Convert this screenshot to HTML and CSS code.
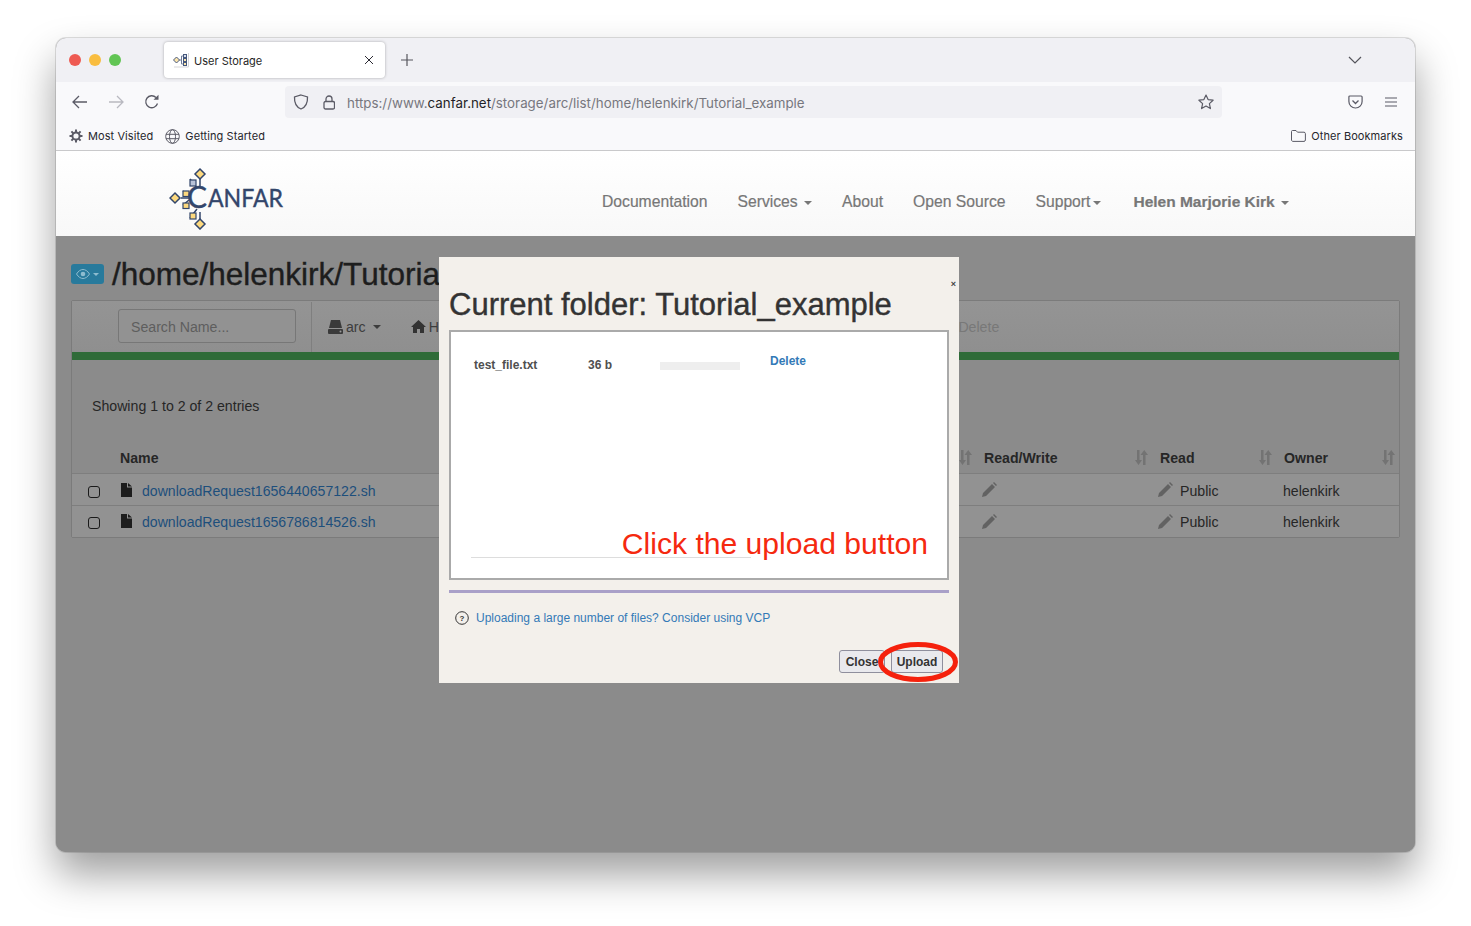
FILE: index.html
```html
<!DOCTYPE html>
<html lang="en">
<head>
<meta charset="utf-8">
<title>User Storage</title>
<link rel="stylesheet" href="styles.css">
</head>
<body>
<div class="window">
  <div class="tabbar">
    <div class="lights"><i class="light red"></i><i class="light amber"></i><i class="light green"></i></div>
    <div class="tab">
      <svg class="favicon" width="16" height="16" viewBox="0 0 16 16" fill="none"><path d="M15.500 1v14H1" stroke="#d5d5d8"/><path d="M6 8h2.500M8.500 8V4h2M8.500 8v4h2" stroke="#6d7b98"/><path d="M3.500 5 6.500 8l-3 3-3-3z" fill="#fde6ad" stroke="#46587c"/><rect x="10.500" y="2.500" width="3" height="3" fill="#d6deec" stroke="#46587c"/><rect x="10.500" y="6.500" width="3" height="3" fill="#fde6ad" stroke="#46587c"/><rect x="10.500" y="10.500" width="3" height="3" fill="#fde6ad" stroke="#46587c"/></svg>
      <span class="tab-title">User Storage</span>
      <svg class="tab-close" width="10" height="10" viewBox="0 0 10 10"><path d="M1 1l8 8M9 1l-8 8" stroke="#2b2a33" stroke-width="1"/></svg>
    </div>
    <svg class="newtab" width="12" height="12" viewBox="0 0 12 12"><path d="M6 0v12M0 6h12" stroke="#55555c" stroke-width="1.200"/></svg>
    <svg class="tabs-menu" width="14" height="8" viewBox="0 0 14 8" fill="none"><path d="M1 1l6 6 6-6" stroke="#55555c" stroke-width="1.200"/></svg>
  </div>

  <div class="toolbar">
    <svg class="tool" width="16" height="14" viewBox="0 0 16 14" fill="none"><path d="M15 7H1.500M7 1 1 7l6 6" stroke="#5b5b66" stroke-width="1.300"/></svg>
    <svg class="tool fwd" width="16" height="14" viewBox="0 0 16 14" fill="none"><path d="M1 7h13.500M9 1l6 6-6 6" stroke="#b9b9c0" stroke-width="1.300"/></svg>
    <svg class="tool reload" width="16" height="16" viewBox="0 0 16 16" fill="none"><path d="M13.500 9.500A6 6 0 1 1 12 3.500" stroke="#5b5b66" stroke-width="1.300"/><path d="M14.500.8v5h-5z" fill="#5b5b66"/></svg>
    <div class="urlbar">
      <svg class="shield" width="16" height="16" viewBox="0 0 16 16" fill="none"><path d="M8 1 14.500 3c.3 6-1.500 10-6.500 12C3 13 1.200 9 1.500 3z" stroke="#5b5b66" stroke-width="1.300"/></svg>
      <svg class="lock" width="12" height="15" viewBox="0 0 12 15" fill="none"><rect x="1" y="6.500" width="10.500" height="7.500" rx="1.500" stroke="#5b5b66" stroke-width="1.300"/><path d="M3 6.500V4a3 3 0 0 1 6 0v2.500" stroke="#5b5b66" stroke-width="1.300"/></svg>
      <span class="url">https://www.<b>canfar.net</b>/storage/arc/list/home/helenkirk/Tutorial_example</span>
      <svg class="star" width="16" height="16" viewBox="0 0 16 16" fill="none"><path d="M8 1l2.100 4.600 5 .6-3.700 3.400 1 5L8 12.100 3.600 14.600l1-5L.9 6.200l5-.6z" stroke="#5b5b66" stroke-width="1.200" stroke-linejoin="round"/></svg>
    </div>
    <svg class="pocket" width="15" height="14" viewBox="0 0 15 14" fill="none"><path d="M1.800 1h11.400c.5 0 .9.400.9.900V6.500A6.500 6.500 0 0 1 7.500 13 6.500 6.500 0 0 1 .9 6.500V1.900c0-.5.400-.9.900-.9z" stroke="#5b5b66" stroke-width="1.200"/><path d="M4.500 5.500l3 3 3-3" stroke="#5b5b66" stroke-width="1.300"/></svg>
    <svg class="menu" width="12" height="10" viewBox="0 0 12 10"><path d="M0 1h12M0 5h12M0 9h12" stroke="#5b5b66" stroke-width="1.100"/></svg>
  </div>

  <div class="bookmarks">
    <svg class="bm-icon" width="14" height="14" viewBox="0 0 14 14"><circle cx="7" cy="7" r="3.600" fill="none" stroke="#5b5b66" stroke-width="2"/><path d="M7 .5v2.500M7 11v2.500M.5 7H3M11 7h2.500M2.400 2.400l1.800 1.800M9.800 9.800l1.800 1.800M11.600 2.400 9.800 4.200M4.200 9.800l-1.800 1.800" stroke="#5b5b66" stroke-width="2"/></svg>
    <span class="bm-label">Most Visited</span>
    <svg class="bm-icon globe" width="15" height="15" viewBox="0 0 15 15" fill="none"><circle cx="7.500" cy="7.500" r="6.800" stroke="#5b5b66"/><ellipse cx="7.500" cy="7.500" rx="3" ry="6.800" stroke="#5b5b66"/><path d="M1 5.300h13M1 9.700h13" stroke="#5b5b66"/></svg>
    <span class="bm-label">Getting Started</span>
    <svg class="bm-icon folder" width="15" height="12" viewBox="0 0 15 12" fill="none"><path d="M1.500.5H5l1.500 1.700H13c.8 0 1.400.6 1.400 1.400v6.400c0 .8-.6 1.400-1.400 1.400H2c-.8 0-1.500-.6-1.500-1.400V1.500c0-.6.400-1 1-1z" stroke="#5b5b66"/></svg>
    <span class="bm-label">Other Bookmarks</span>
  </div>

  <header class="site-header">
    <svg class="logo" width="125" height="64" viewBox="0 0 125 64" fill="none" role="img" aria-label="CANFAR">
      <path d="M31 10v12M21 13l7 9M31 46v12M21 52l7-9M12 32h8M14 25l6 5M14 39l6-5" stroke="#33466b" stroke-width="1.500"/>
      <path d="M31 3l5 5-5 5-5-5z" fill="#fdd97e" stroke="#33466b" stroke-width="1.500"/>
      <path d="M31 53l5 5-5 5-5-5z" fill="#fdd97e" stroke="#33466b" stroke-width="1.500"/>
      <path d="M6 27l5 5-5 5-5-5z" fill="#fdd97e" stroke="#33466b" stroke-width="1.500"/>
      <rect x="21" y="14" width="6" height="6" fill="#b9c3d8" stroke="#33466b" stroke-width="1.200"/>
      <rect x="14" y="25" width="6" height="5.500" fill="#fdd97e" stroke="#33466b" stroke-width="1.200"/>
      <rect x="14" y="37" width="6" height="5.500" fill="#fdd97e" stroke="#33466b" stroke-width="1.200"/>
      <rect x="21" y="47" width="6" height="6" fill="#fdd97e" stroke="#33466b" stroke-width="1.200"/>
      <text class="logo-c" x="18" y="42">C</text>
      <text class="logo-text" x="39" y="41" textLength="75" lengthAdjust="spacingAndGlyphs">ANFAR</text>
    </svg>
    <nav class="site-nav">
      <a class="nav-link">Documentation</a>
      <a class="nav-link">Services <i class="caret"></i></a>
      <a class="nav-link">About</a>
      <a class="nav-link">Open Source</a>
      <a class="nav-link">Support<i class="caret tight"></i></a>
      <a class="nav-link user">Helen Marjorie Kirk <i class="caret"></i></a>
    </nav>
  </header>

  <main class="content">
    <div class="page-title">
      <button class="eye-btn">
        <svg width="14" height="10" viewBox="0 0 14 10" fill="none"><path d="M.5 5C2.500 1.800 4.800.5 7 .5S11.500 1.800 13.500 5C11.500 8.200 9.200 9.500 7 9.500S2.500 8.200.5 5z" stroke="#8dbccf"/><circle cx="7" cy="5" r="2.300" fill="#8dbccf"/></svg>
        <i class="caret light-caret"></i>
      </button>
      <h1>/home/helenkirk/Tutorial_example</h1>
    </div>

    <section class="panel">
      <div class="panel-tools">
        <div class="search">Search Name...</div>
        <div class="tool-divider"></div>
        <span class="tool-item arc">
          <svg width="15" height="14" viewBox="0 0 15 14"><path d="M3 0h9l2 8H1z" fill="#3a3a3a"/><rect y="9" width="15" height="5" rx="1" fill="#3a3a3a"/><circle cx="12.500" cy="11.500" r="1" fill="#999"/></svg>
          arc <i class="caret"></i>
        </span>
        <span class="tool-item home">
          <svg width="15" height="13" viewBox="0 0 15 13"><path d="M7.500 0 15 7h-2v6H9V9H6v4H2V7H0z" fill="#333"/></svg>
          Home
        </span>
        <span class="tool-item delete">Delete</span>
      </div>
      <div class="green-bar"></div>
      <p class="entries">Showing 1 to 2 of 2 entries</p>
      <div class="table">
        <div class="thead">
          <span></span>
          <span class="th">Name<svg class="sort"><use href="#sort"/></svg></span>
          <span class="th">Read/Write<svg class="sort"><use href="#sort"/></svg></span>
          <span class="th">Read<svg class="sort"><use href="#sort"/></svg></span>
          <span class="th last">Owner<svg class="sort"><use href="#sort"/></svg></span>
        </div>
        <div class="tr">
          <span class="check-cell"><i class="check"></i></span>
          <span class="td"><svg class="file"><use href="#file"/></svg><a class="file-link">downloadRequest1656440657122.sh</a></span>
          <span class="td"><svg class="pencil"><use href="#pencil"/></svg></span>
          <span class="td"><svg class="pencil"><use href="#pencil"/></svg><span class="public">Public</span></span>
          <span class="td owner">helenkirk</span>
        </div>
        <div class="tr">
          <span class="check-cell"><i class="check"></i></span>
          <span class="td"><svg class="file"><use href="#file"/></svg><a class="file-link">downloadRequest1656786814526.sh</a></span>
          <span class="td"><svg class="pencil"><use href="#pencil"/></svg></span>
          <span class="td"><svg class="pencil"><use href="#pencil"/></svg><span class="public">Public</span></span>
          <span class="td owner">helenkirk</span>
        </div>
      </div>
    </section>

    <div class="modal">
      <span class="modal-x">×</span>
      <h2>Current folder: Tutorial_example</h2>
      <div class="file-box">
        <div class="file-row">
          <span class="f-name">test_file.txt</span>
          <span class="f-size">36 b</span>
          <span class="f-bar"></span>
          <a class="f-del">Delete</a>
        </div>
        <div class="file-rule"></div>
        <span class="note">Click the upload button</span>
      </div>
      <div class="purple"></div>
      <div class="help">
        <svg width="14" height="14" viewBox="0 0 14 14" fill="none"><circle cx="7" cy="7" r="6.300" stroke="#333"/><text class="q" x="7" y="9.600">?</text></svg>
        <a class="help-link">Uploading a large number of files? Consider using VCP</a>
      </div>
      <div class="modal-actions">
        <button class="btn close">Close</button>
        <button class="btn upload">Upload</button>
      </div>
      <svg class="ring" width="84" height="44" viewBox="0 0 84 44" fill="none"><ellipse cx="42" cy="22" rx="37.500" ry="17.500" stroke="#f5210c" stroke-width="5"/></svg>
    </div>
  </main>
</div>

<svg class="defs" width="0" height="0">
  <defs>
    <symbol id="sort" viewBox="0 0 14 15"><path d="M3 0h2.500v10H8l-3.500 5L1 10h2zM9 15h2.500V5H14L10.250 0 6.500 5H9z" fill="#737373"/></symbol>
    <symbol id="file" viewBox="0 0 11 14"><path d="M0 0h6v4.500h5V14H0zM7 0l4 3.500H7z" fill="#1d1d1d"/></symbol>
    <symbol id="pencil" viewBox="0 0 15 15"><path d="M0 15l1-4L10 2l3 3-9 9zM11 1l1-1 3 3-1 1z" fill="#626262"/></symbol>
  </defs>
</svg>
</body>
</html>
```

FILE: styles.css
```css
* { box-sizing: border-box; }
html, body { margin: 0; height: 100%; overflow: hidden; background: #fff; }
body { padding: 38px 56px 0; font-family: "Liberation Sans", Arial, sans-serif; }
i { display: inline-block; font-style: normal; }
a { text-decoration: none; }
h1, h2, p { margin: 0; font-weight: 400; }

.window {
  width: 1359px;
  height: 814px;
  border-radius: 10px;
  overflow: hidden;
  display: flex;
  flex-direction: column;
  box-shadow: 0 0 0 1px rgba(0,0,0,.12), 0 22px 40px rgba(0,0,0,.38);
  background: #8b8b8b;
}

/* browser chrome */
.tabbar {
  height: 44px;
  background: #f0f0f4;
  display: flex;
  align-items: center;
  padding-left: 13px;
  flex: none;
}
.lights { display: flex; gap: 8px; width: 95px; }
.light { width: 12px; height: 12px; border-radius: 50%; }
.red { background: #ee5a52; }
.amber { background: #f9bd3f; }
.green { background: #62c554; }
.tab {
  width: 221px;
  height: 36px;
  background: #fff;
  border-radius: 4px;
  box-shadow: 0 0 3px rgba(0,0,0,.3);
  display: flex;
  align-items: center;
  padding: 0 11px 0 9px;
  font: 11px Inter, sans-serif;
  color: #1f1f26;
}
.favicon { margin-right: 5px; }
.tab-title { flex: 1; padding-top: 2px; }
.newtab { margin-left: 16px; }
.tabs-menu { margin-left: 935px; }

.toolbar {
  height: 42px;
  background: #f9f9fb;
  display: flex;
  align-items: center;
  padding: 0 16px 2px 16px;
  flex: none;
}
.fwd { margin-left: 20px; }
.reload { margin-left: 20px; }
.urlbar {
  margin-left: 125px;
  width: 937px;
  height: 32px;
  background: #f0f0f4;
  border-radius: 4px;
  display: flex;
  align-items: center;
  padding: 0 8px;
}
.lock { margin-left: 14px; }
.url { flex: 1; margin-left: 12px; padding-top: 2px; font: 13.350px Inter, sans-serif; color: #77777e; }
.url b { font-weight: 400; color: #1f1f26; }
.pocket { margin-left: 126px; }
.menu { margin-left: 22px; }

.bookmarks {
  height: 27px;
  background: #f9f9fb;
  border-bottom: 1px solid #c9c9cb;
  display: flex;
  align-items: center;
  padding: 0 12px 2px 13px;
  flex: none;
  font: 11px Inter, sans-serif;
  letter-spacing: .08px;
  color: #26262c;
}
.bm-label { margin-left: 5px; }
.globe { margin-left: 12px; }
.folder { margin-left: auto; }

.site-header {
  height: 85px;
  flex: none;
  background: linear-gradient(#fff, #f8f8f8);
  display: flex;
  align-items: center;
  position: relative;
}
.logo { margin-left: 113px; margin-top: 8px; flex: none; }
.logo-text { font: 25px Lato, sans-serif; fill: #33466b; stroke: #33466b; stroke-width: .4px; }
.logo-c { font: 30px Lato, sans-serif; fill: #33466b; stroke: #33466b; stroke-width: .4px; }
.site-nav {
  margin-left: 308px;
  display: flex;
  gap: 30px;
  font-size: 15.700px;
  color: #777;
  white-space: nowrap;
  margin-top: 17px;
  -webkit-text-stroke: .2px #777;
}
.user { font-weight: 700; font-size: 15.500px; margin-left: 2px; }
.caret {
  width: 0;
  height: 0;
  border: 4px solid transparent;
  border-top-color: currentColor;
  border-bottom: 0;
  margin-left: 2px;
  vertical-align: middle;
}
.caret.tight { margin-left: 3px; }

/* dimmed page */
.content {
  flex: 1;
  position: relative;
  background: #8b8b8b;
  padding: 28px 15px 0 15px;
}
.page-title { display: flex; align-items: center; height: 20px; }
.eye-btn {
  width: 33px;
  height: 20px;
  padding: 0 0 0 5px;
  border: 0;
  border-radius: 3px;
  background: #287a9c;
  display: flex;
  align-items: center;
  color: #8dbccf;
}
.light-caret { margin-left: 3px; border-width: 3px; border-bottom: 0; }
h1 { margin-left: 8px; font-size: 31.500px; color: #1d1d1d; white-space: nowrap; line-height: 20px; -webkit-text-stroke: .4px #1d1d1d; }

.panel {
  margin: 16px 0 0;
  border: 1px solid #7b7b7b;
  border-radius: 2px;
  height: 238px;
  font-size: 14.150px;
  color: #262626;
}
.panel-tools {
  height: 51px;
  padding-bottom: 2px;
  background: linear-gradient(#949494, #8f8f8f);
  display: flex;
  align-items: center;
  position: relative;
}
.search {
  width: 178px;
  height: 34px;
  margin-left: 46px;
  border: 1px solid #777;
  border-radius: 3px;
  background: #929292;
  color: #5e5e5e;
  padding-left: 12px;
  line-height: 34px;
}
.tool-divider { width: 1px; height: 50px; margin-top: 2px; background: #7f7f7f; margin-left: 15px; }
.tool-item { display: inline-flex; align-items: center; gap: 3px; color: #3d3d3d; padding-top: 2px; }
.arc { margin-left: 16px; }
.arc .caret { margin-left: 4px; }
.home { margin-left: 30px; }
.delete { margin-left: 492px; color: #787878; }
.green-bar { height: 8px; background: #2f6b38; }
.entries { padding: 36px 0 0 20px; line-height: 20px; }

.table { margin-top: 25px; }
.thead, .tr {
  display: grid;
  grid-template-columns: 48px 864px 176px 124px 1fr;
  align-items: center;
}
.thead { height: 33px; border-bottom: 1px solid #7e7e7e; font-weight: 700; padding-top: 1px; }
.tr { height: 32px; padding-top: 2px; background: #929292; border-bottom: 1px solid #7e7e7e; }
.tr:last-child { height: 31px; padding-top: 1px; border-bottom: 0; }
.th { display: flex; justify-content: space-between; align-items: center; padding-right: 12px; }
.th:first-of-type { }
.th.last { padding-right: 4px; }
.sort { width: 14px; height: 15px; }
.check-cell { display: flex; padding-left: 16px; }
.check { width: 12px; height: 12px; border: 1px solid #1a1a1a; border-radius: 3px; margin-top: 2px; }
.td { display: flex; align-items: center; white-space: nowrap; }
.owner { margin-left: -1px; }
.file { width: 11px; height: 14px; margin: -2px 10px 0 1px; }
.file-link { color: #1d4f7c; font-size: 14.100px; }
.pencil { width: 15px; height: 15px; margin: -2px 7px 0 -2px; }

/* dialog */
.modal {
  position: absolute;
  left: 383px;
  top: 21px;
  width: 520px;
  height: 426px;
  background: #f3f0eb;
  padding: 0 10px;
  color: #333;
}
.modal-x { position: absolute; right: 3px; top: 22px; font: 700 9px "Liberation Sans", sans-serif; color: #444; }
h2 { font-size: 31px; line-height: 33px; padding-top: 31px; height: 73px; white-space: nowrap; -webkit-text-stroke: .4px #333; }
.file-box {
  width: 500px;
  height: 250px;
  border: 2px solid #aaa;
  background: #fff;
  position: relative;
  padding: 0 0 0 23px;
}
.file-row { display: flex; align-items: flex-start; font-size: 12px; font-weight: 700; color: #4f4f4f; padding-top: 26px; }
.f-name { width: 114px; }
.f-size { width: 72px; }
.f-bar { width: 80px; height: 8px; margin-top: 4px; background: #eee; }
.f-del { margin-left: 30px; margin-top: -4px; color: #337ab7; }
.file-rule { position: absolute; left: 20px; top: 225px; width: 280px; height: 1px; background: #ddd; }
.note { position: absolute; right: 19px; top: 192px; font-size: 30.100px; line-height: 40px; color: #f5290f; white-space: nowrap; }
.purple { height: 3px; width: 500px; margin-top: 10px; background: #a9a0c8; }
.help { display: flex; align-items: center; gap: 7px; margin: 17px 0 0 6px; height: 16px; font-size: 12px; }
.q { font: 700 8px "Liberation Sans", sans-serif; text-anchor: middle; fill: #333; }
.help-link { color: #337ab7; }
.modal-actions { display: flex; margin: 24px 0 0 390px; }
.btn {
  height: 23px;
  padding: 0;
  font: 700 12px "Liberation Sans", sans-serif;
  color: #333;
  border: 1px solid #8f8f9d;
  border-radius: 3px;
  background: #e9e9ed;
}
.close { width: 46px; }
.upload { width: 52px; margin-left: 6px; }
.ring { position: absolute; right: -1px; top: 383px; }
.defs { position: absolute; }
```
